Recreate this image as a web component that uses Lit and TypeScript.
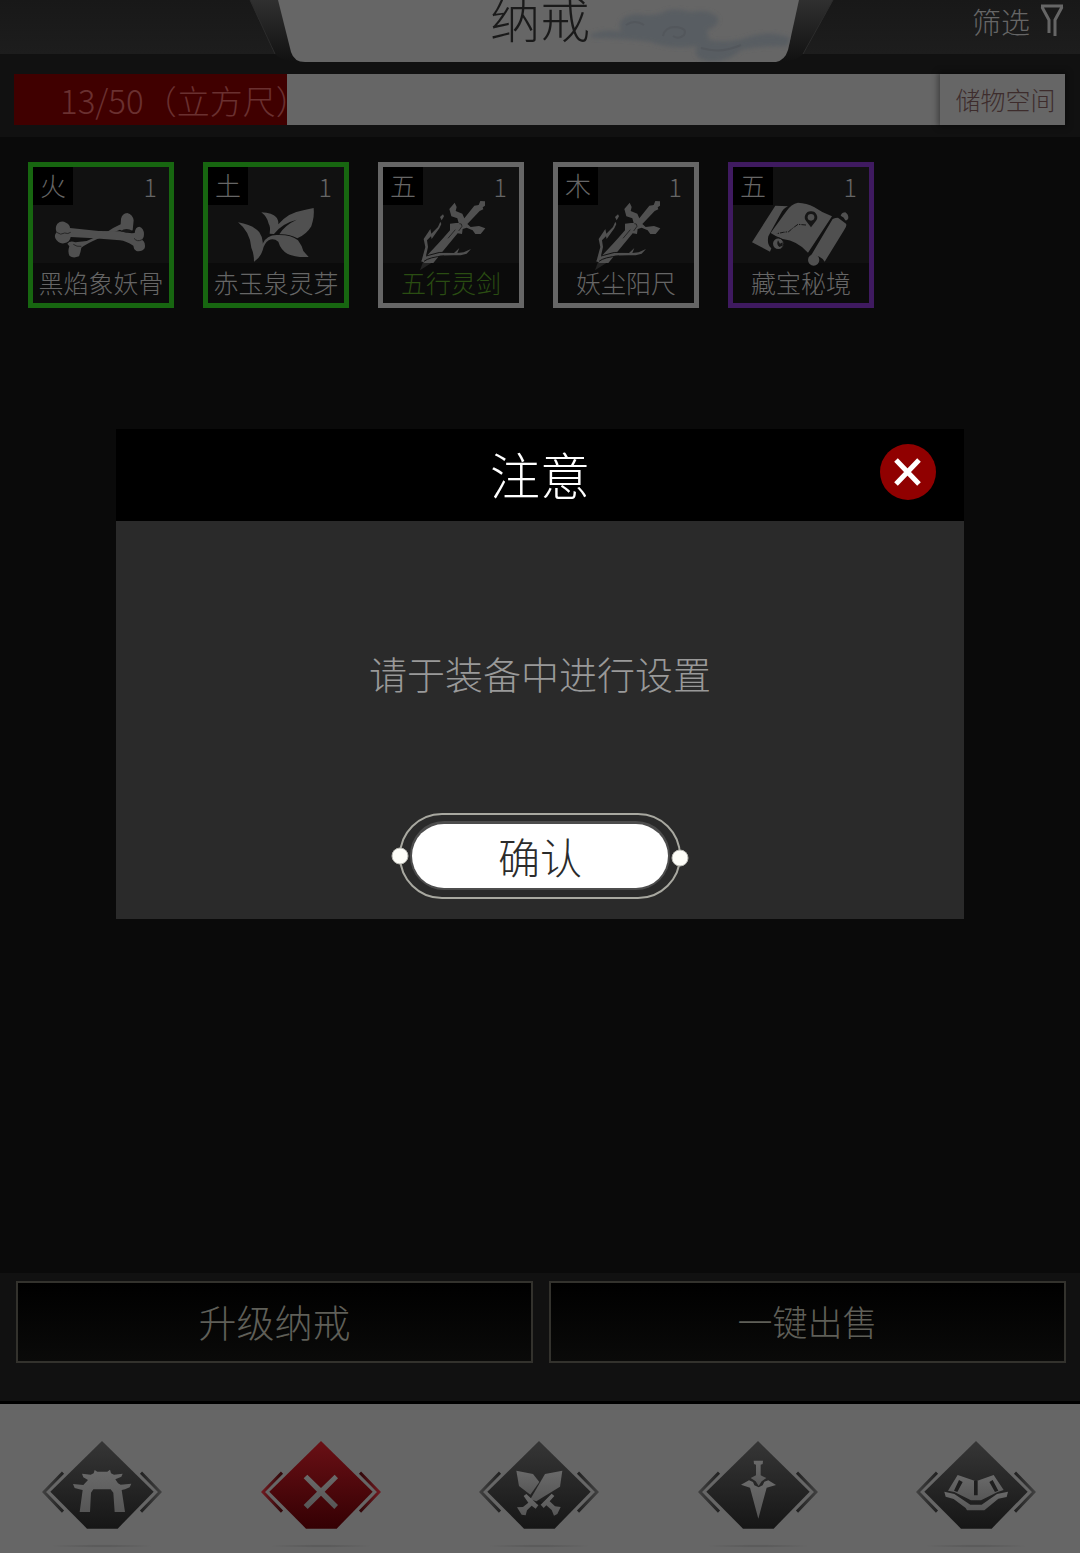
import { LitElement, html, svg, css } from "lit";
import { customElement, property, state } from "lit/decorators.js";
import { classMap } from "lit/directives/class-map.js";
import { styleMap } from "lit/directives/style-map.js";

type Art = "bone" | "sprout" | "sword" | "map";
type Rarity = "green" | "white" | "purple";

interface Item {
  element: string;
  count: number;
  name: string;
  art: Art;
  rarity: Rarity;
  marked?: boolean;
}

const ITEMS: Item[] = [
  { element: "火", count: 1, name: "黑焰象妖骨", art: "bone", rarity: "green" },
  { element: "土", count: 1, name: "赤玉泉灵芽", art: "sprout", rarity: "green" },
  { element: "五", count: 1, name: "五行灵剑", art: "sword", rarity: "white", marked: true },
  { element: "木", count: 1, name: "妖尘阳尺", art: "sword", rarity: "white" },
  { element: "五", count: 1, name: "藏宝秘境", art: "map", rarity: "purple" },
];

const ART = {
  bone: {
    box: "39 36 408 408",
    shape: svg`
      <g fill="#505050">
        <path d="M148 274 Q142 292 149 303 Q160 311 177 304 Q182 292 184 278 Q200 266 232 252 L300 224 Q318 236 338 226 L341 196 Q338 178 322 174 Q306 176 303 192 L302 208 Q280 218 262 230 L200 258 L166 262 Q150 256 142 266Z"/>
        <path d="M112 206 Q124 195 138 203 Q150 208 150 219 L236 228 L300 229 Q326 236 344 234 Q346 215 358 215 Q372 220 372 238 Q373 247 366 254 Q378 262 374 280 Q366 291 349 288 Q340 282 340 272 Q318 258 300 256 L222 250 L152 246 Q150 262 132 265 Q114 267 106 250 Q102 240 110 232 Q104 218 112 206Z"/>
      </g>
      <path d="M110 232 Q122 242 134 234 M134 234 Q144 238 152 232 M366 254 Q352 262 342 250 M160 268 Q170 276 184 274" fill="none" stroke="#262626" stroke-width="3"/>
      <path d="M302 229 Q318 216 338 228 Q320 236 302 229Z" fill="#181818"/>`,
  },
  sprout: {
    box: "564 36 408 408",
    shape: svg`
      <path d="M654 202 Q700 210 718 232 Q730 250 728 266 Q740 240 770 240 Q812 238 834 256 Q846 272 850 288 L866 306 Q824 308 802 296 Q782 284 775 260 Q760 248 746 256 Q732 266 728 286 Q720 310 702 320 Q702 296 694 278 Q690 230 654 202Z" fill="#505050"/>
      <path d="M724 172 Q758 174 768 186 Q776 194 775 208 Q806 172 850 166 Q868 162 881 159 Q884 184 874 214 Q860 238 832 250 Q806 236 778 238 Q792 212 830 194 Q784 206 762 237 L749 236 Q752 214 746 206 Q742 186 724 172Z" fill="#505050"/>`,
  },
  sword: {
    box: "39 36 408 408",
    shape: svg`
      <g fill="#505050">
        <path d="M313 152 L326 150 L331 138 L345 139 L345 152 L338 157 L340 163 L329 168 L292 207 L302 216 L327 213 L346 220 L332 237 L316 237 L308 226 L290 218 L278 222 L276 237 L263 235 L216 292 L190 324 L163 324 L154 318 Q190 284 240 226 L240 206 L258 204 L266 204 L262 190 L244 184 L238 162 L254 143 L260 156 L257 168 L277 176 L283 190Z"/>
        <path d="M154 320 L166 276 L161 252 L181 222 L184 236 L204 216 L211 200 L214 207 L208 220 L185 252 L183 244 L171 256 L174 276 L168 302 Q206 290 252 294 L268 279 L262 294 L281 292 L303 282 L290 296 L272 301 Q230 300 190 303 Q174 306 154 320Z"/>
        <path d="M215 196 L210 186 L219 178 L222 184Z"/>
        <path d="M158 324 L184 324 L150 346Z" opacity=".35"/>
      </g>
      <path d="M190 272 L172 298 M168 303 Q206 288 250 291 M162 319 Q178 306 222 303" fill="none" stroke="#131313" stroke-width="3"/>
      <path d="M268 206 Q276 204 276 214 L266 228 M256 224 L234 250" fill="none" stroke="#262626" stroke-width="3"/>`,
  },
  map: {
    box: "39 36 408 408",
    shape: svg`
      <g fill="#505050">
        <path d="M166 152 L204 154 Q190 160 182 176 L145 244 Q140 268 154 280 L150 290 L96 262Z"/>
        <path d="M152 234 L198 170 Q214 146 234 143 Q260 144 282 156 Q308 174 336 184 L264 293 Q234 258 188 252 Q166 244 152 234Z"/>
        <path d="M338 192 Q346 188 354 188 L378 206 Q382 212 372 226 L314 320 Q302 300 274 300Z"/>
        <circle cx="175" cy="266" r="16"/>
        <circle cx="281" cy="315" r="17"/>
        <path d="M362 182 Q366 172 376 172 Q386 178 385 190 Q382 198 376 196 Q372 186 362 182Z"/>
      </g>
      <path d="M166 248 Q186 246 192 264 Q190 276 182 284" fill="none" stroke="#161616" stroke-width="3"/>
      <path d="M174 256 Q168 268 178 276 L188 272 L188 262 L180 266Z" fill="#161616"/>
      <path d="M273 169 A18 18 0 0 1 287 199 L273 217 L259 199 A18 18 0 0 1 273 169Z" fill="#161616"/>
      <circle cx="273" cy="187" r="10" fill="#505050"/>
      <path d="M258 210 L234 208 L220 218 L206 230 L190 232 L170 236" fill="none" stroke="#161616" stroke-width="3" stroke-dasharray="14 3 4 3"/>`,
  },
};

interface NavEntry {
  label: string;
  centre: number;
  active?: boolean;
  glyph: unknown;
}

const NAV: NavEntry[] = [
  {
    label: "宗门",
    centre: 306,
    glyph: svg`<path d="M284 240 L292 245 L322 245 L330 239 L333 250 L342 254 L368 251 L364 260 L346 268 L354 280 L362 284 L394 281 L389 292 L375 298 L365 300 L375 366 L344 366 L340 308 L332 298 L280 298 L273 308 L270 366 L239 366 L248 300 L238 298 L224 294 L219 282 L250 285 L264 270 L250 262 L246 251 L272 254 L281 250Z"/>`,
  },
  {
    label: "关闭",
    centre: 963,
    active: true,
    glyph: svg`<path d="M922 254 L963 294 L1004 254 L1014 265 L974 305 L1014 345 L1003 357 L963 317 L923 357 L911 345 L951 305 L911 265Z"/>`,
  },
  {
    label: "战斗",
    centre: 298,
    glyph: svg`
      <path d="M230 242 L280 252 L299 276 L272 314 L238 288Z"/>
      <path d="M368 242 L361 290 L290 334 L272 328 L316 252Z"/>
      <path d="M252 318 L260 312 L296 346 L288 356 L276 347 L262 361 L258 376 L246 374 L232 352 L250 351 L266 338Z"/>
      <path d="M336 311 L344 318 L330 334 L346 349 L363 351 L353 372 L343 377 L336 360 L320 346 L312 354 L303 344Z"/>
      <path d="M298 332 L308 338 L298 344 L288 338Z" fill="#1a1a1a"/>`,
  },
  {
    label: "法宝",
    centre: 953,
    glyph: svg`
      <path d="M940 212 L968 212 L967 222 L961 224 L961 256 L978 264 L964 274 L955 288 L946 274 L931 264 L947 256 L947 224 L941 222Z"/>
      <path d="M902 284 L926 271 L938 276 L942 286 L955 292 L967 286 L972 275 L984 271 L1007 285 L979 293 L954 386 L929 293Z"/>`,
  },
  {
    label: "功法",
    centre: 287,
    glyph: svg`
      <path d="M232 255 L287 274 L340 255 L370 300 L352 306 L302 331 L272 331 L222 306 L203 302Z"/>
      <path d="M192 305 L222 312 L270 344 L304 344 L350 312 L383 305 L379 321 L354 326 L312 361 L260 361 L256 354 L220 327 L196 320Z"/>
      <path d="M281 272 L292 272 L292 316 L281 316Z M236 270 L247 276 L231 306 L221 302Z M337 270 L327 276 L344 306 L354 302Z" fill="#1e1e1e"/>`,
  },
];

@customElement("item-slot")
export class ItemSlot extends LitElement {
  @property({ attribute: false }) item!: Item;

  static styles = css`
    :host {
      display: block;
    }
    .slot {
      box-sizing: border-box;
      width: 146px;
      height: 146px;
      padding: 0;
      border: 5px solid #666;
      background: #111;
      color: #666;
      font: inherit;
      display: grid;
      grid-template-columns: 40px 1fr;
      grid-template-rows: 38px 1fr 40px;
    }
    .green {
      border-color: #176610;
    }
    .purple {
      border-color: #3f1a60;
    }
    .art {
      grid-area: 1 / 1 / 4 / 3;
      width: 136px;
      height: 136px;
      z-index: 1;
    }
    .badge {
      grid-area: 1 / 1;
      z-index: 2;
      background: #000;
      font-size: 26px;
      line-height: 36px;
    }
    .count {
      grid-area: 1 / 2;
      padding-right: 12px;
      text-align: right;
      font-size: 25px;
      line-height: 38px;
    }
    .name {
      grid-area: 3 / 1 / 4 / 3;
      background: #0b0b0b;
      font-size: 25px;
      line-height: 38px;
      white-space: nowrap;
    }
    .marked {
      color: #2a4d12;
    }
  `;

  render() {
    const { element, count, name, art, rarity, marked } = this.item;
    return html`
      <button class="slot ${rarity}">
        <span class="badge">${element}</span>
        <span class="count">${count}</span>
        <svg class="art" viewBox=${ART[art].box} aria-hidden="true">${ART[art].shape}</svg>
        <span class=${classMap({ name: true, marked: !!marked })}>${name}</span>
      </button>
    `;
  }
}

@customElement("nav-bar")
export class NavBar extends LitElement {
  static styles = css`
    :host {
      display: block;
    }
    .bar {
      display: flex;
      justify-content: space-between;
      padding: 37px 44px 0 42px;
      border-top: 3px solid #000;
      background: #666;
    }
    .link {
      display: block;
    }
    .icon {
      display: block;
      width: 120px;
      height: 112px;
    }
  `;

  private renderEntry(n: NavEntry, i: number) {
    const top = n.active ? "#6a1015" : "#363636";
    const bottom = n.active ? "#340003" : "#161616";
    return html`
      <a class="link" href="#" aria-label=${n.label} aria-current=${n.active ? "page" : "false"}>
        <svg class="icon" viewBox="-180 153 360 336" aria-hidden="true">
          <defs>
            <linearGradient id="body${i}" x1="0" y1="0" x2="0" y2="1">
              <stop offset="0" stop-color=${top} />
              <stop offset="1" stop-color=${bottom} />
            </linearGradient>
            <linearGradient id="mark${i}" x1="0" y1="0" x2="0" y2="1">
              <stop offset="0" stop-color="#6a6a6a" />
              <stop offset="1" stop-color="#565656" />
            </linearGradient>
            <linearGradient id="wing${i}" gradientUnits="userSpaceOnUse" x1="-178" y1="0" x2="178" y2="0">
              <stop offset="0" stop-color=${n.active ? "#701a20" : "#404040"} />
              <stop offset=".17" stop-color=${n.active ? "#30080a" : "#222"} />
              <stop offset=".83" stop-color=${n.active ? "#30080a" : "#222"} />
              <stop offset="1" stop-color=${n.active ? "#701a20" : "#404040"} />
            </linearGradient>
            <radialGradient id="shade${i}">
              <stop offset="0" stop-color="#000" stop-opacity=".16" />
              <stop offset="1" stop-color="#000" stop-opacity="0" />
            </radialGradient>
          </defs>
          <path d="M0 153 L155 305 L47 416 L-45 416 L-155 305Z" fill="url(#body${i})" />
          <path
            d="M-117 248 L-174 306 L-117 365 M117 248 L174 306 L117 365"
            fill="none"
            stroke="url(#wing${i})"
            stroke-width="9"
          />
          <g transform="translate(${-n.centre} 0)" fill="url(#mark${i})">${n.glyph}</g>
          <ellipse cx="0" cy="468" rx="160" ry="5" fill="url(#shade${i})" />
        </svg>
      </a>
    `;
  }

  render() {
    return html`<nav class="bar">${NAV.map((n, i) => this.renderEntry(n, i))}</nav>`;
  }
}

@customElement("notice-dialog")
export class NoticeDialog extends LitElement {
  static styles = css`
    :host {
      display: block;
    }
    .panel {
      background: #2a2a2a;
    }
    .head {
      display: grid;
      grid-template-columns: 84px 1fr 84px;
      align-items: center;
      height: 92px;
      background: #000;
    }
    .title {
      grid-column: 2;
      margin: 0;
      color: #fff;
      font-size: 50px;
      font-weight: inherit;
      line-height: 88px;
      text-align: center;
      align-self: start;
    }
    .close {
      width: 56px;
      height: 56px;
      margin-bottom: 6px;
      padding: 0;
      border: 0;
      border-radius: 50%;
      background: #900000;
    }
    .cross {
      display: block;
      width: 56px;
      height: 56px;
    }
    .message {
      margin: 0;
      padding: 122px 24px 110px;
      color: #999;
      font-size: 38px;
      line-height: 60px;
      text-align: center;
    }
    .actions {
      display: flex;
      justify-content: center;
      padding-bottom: 20px;
    }
    .confirm {
      display: grid;
      place-items: center;
      padding: 0;
      border: 0;
      background: none;
      color: #2b2b2b;
      font: inherit;
      font-size: 42px;
      line-height: 60px;
    }
    .frame,
    .label {
      grid-area: 1 / 1;
    }
    .frame {
      display: block;
      width: 300px;
      height: 86px;
    }
  `;

  private dismiss() {
    this.dispatchEvent(new CustomEvent("dismiss", { bubbles: true, composed: true }));
  }

  render() {
    return html`
      <section class="panel" role="dialog" aria-modal="true" aria-labelledby="title">
        <header class="head">
          <h2 class="title" id="title">注意</h2>
          <button class="close" aria-label="关闭" @click=${this.dismiss}>
            <svg class="cross" viewBox="0 0 56 56" aria-hidden="true">
              <path d="M16 16 L39 40 M39 16 L16 40" stroke="#fff" stroke-width="5" />
            </svg>
          </button>
        </header>
        <p class="message">请于装备中进行设置</p>
        <div class="actions">
          <button class="confirm" @click=${this.dismiss}>
            <svg class="frame" viewBox="0 0 300 86" aria-hidden="true">
              <rect x="10" y="1" width="280" height="84" rx="42" fill="none" stroke="#a8a8a0" stroke-width="2" />
              <rect x="20" y="8" width="260" height="69" rx="34" fill="#4c4c4c" />
              <rect x="22" y="11" width="256" height="64" rx="32" fill="#fff" />
              <circle cx="10" cy="43" r="8" fill="#fdfdf8" stroke="#b9b9b2" />
              <circle cx="290" cy="45" r="8" fill="#fdfdf8" stroke="#b9b9b2" />
            </svg>
            <span class="label">确认</span>
          </button>
        </div>
      </section>
    `;
  }
}

@customElement("app-root")
export class AppRoot extends LitElement {
  @state() private noticeOpen = true;
  @state() private used = 13;
  @state() private capacity = 50;

  static styles = css`
    :host {
      display: block;
      font-family: "Noto Sans CJK SC", "Noto Sans", sans-serif;
      font-weight: 300;
    }
    .page {
      position: relative;
      display: flex;
      flex-direction: column;
      min-height: 100vh;
      background: #0a0a0a;
    }
    .top {
      position: relative;
      z-index: 1;
      display: grid;
      grid-template-columns: 1fr 590px 1fr;
      height: 54px;
      background: linear-gradient(#181818, #1d1d1d);
    }
    .tab {
      grid-column: 2;
      display: grid;
      justify-items: center;
      height: 62px;
    }
    .plate,
    .title {
      grid-area: 1 / 1;
    }
    .plate {
      display: block;
      width: 590px;
      height: 62px;
    }
    .title {
      margin: 0;
      color: #1a1a1a;
      font-size: 50px;
      font-weight: inherit;
      line-height: 32px;
    }
    .filter {
      justify-self: end;
      align-self: start;
      display: flex;
      align-items: center;
      gap: 10px;
      padding: 0 16px 0 0;
      border: 0;
      background: none;
      color: #666;
      font: inherit;
      font-size: 29px;
      line-height: 42px;
    }
    .funnel {
      width: 24px;
      height: 34px;
    }
    .storage {
      padding: 20px 15px 12px 14px;
      background: #111;
    }
    .meter {
      display: flex;
      justify-content: space-between;
      height: 51px;
      background: #666;
    }
    .fill {
      box-sizing: border-box;
      padding-left: 46px;
      background: #400000;
      color: #6a3030;
      font-size: 33px;
      line-height: 53px;
      white-space: nowrap;
    }
    .space {
      width: 125px;
      padding: 0 0 2px 6px;
      border: 0;
      background: #666;
      box-shadow: 0 0 6px 2px rgba(0, 0, 0, 0.4);
      color: #3d2c2c;
      font: inherit;
      font-size: 25px;
    }
    .items {
      flex: 1;
      display: flex;
      flex-wrap: wrap;
      align-content: flex-start;
      gap: 29px;
      margin: 0;
      padding: 25px 28px;
      list-style: none;
    }
    .actions {
      display: grid;
      grid-template-columns: 1fr 1fr;
      gap: 16px;
      padding: 8px 14px 38px 16px;
      background: #111;
    }
    .action {
      height: 82px;
      padding: 0 0 4px;
      border: 2px solid #33322d;
      background: linear-gradient(#000, #0a0a09);
      color: #5f5f58;
      font: inherit;
      font-size: 38px;
    }
    .compact {
      font-size: 35px;
    }
    .overlay {
      position: absolute;
      z-index: 2;
      inset: 0;
      padding: 429px 116px 0;
    }
  `;

  render() {
    const share = (this.used / this.capacity) * 100;
    return html`
      <main class="page">
        <header class="top">
          <div class="tab">
            <svg class="plate" viewBox="0 0 590 62" aria-hidden="true">
              <defs>
                <linearGradient id="edge" x1="0" y1="0" x2="0" y2="1">
                  <stop offset="0" stop-color="#303030" />
                  <stop offset="1" stop-color="#111" />
                </linearGradient>
                <filter id="mist" x="-10%" y="-10%" width="120%" height="120%">
                  <feGaussianBlur stdDeviation="2" />
                </filter>
                <clipPath id="face">
                  <path d="M33 0 L46 52 Q49 62 60 62 L531 62 Q540 60 543 50 L554 0Z" />
                </clipPath>
              </defs>
              <path d="M5 0 L30 54 Q38 62 60 62 L531 62 Q550 62 558 54 L588 0Z" fill="url(#edge)" />
              <path d="M5 0 L30 54 M558 54 L588 0" stroke="#2c2c2c" fill="none" />
              <g clip-path="url(#face)">
                <rect width="590" height="62" fill="#666" />
                <g transform="translate(6 0)">
                  <path
                    d="M340 34 Q356 28 370 32 Q364 16 386 14 Q398 16 408 14 Q420 6 440 12 Q462 8 468 20 Q464 28 456 30 L458 40 Q480 44 500 36 Q520 30 540 38 L536 46 Q508 46 490 50 Q480 60 462 62 Q440 60 446 46 Q420 50 400 42 Q370 38 340 38Z"
                    filter="url(#mist)"
                    fill="#595d62"
                  />
                  <path
                    d="M412 36 Q414 27 424 27 Q437 28 433 35 Q428 40 422 36 M375 25 Q384 19 393 25 M450 48 Q470 54 490 45"
                    fill="none"
                    stroke="#53575c"
                    stroke-width="2"
                  />
                </g>
              </g>
            </svg>
            <h1 class="title">纳戒</h1>
          </div>
          <button class="filter">
            筛选
            <svg class="funnel" viewBox="0 0 24 34" aria-hidden="true">
              <path
                d="M1 2 H23 M2 3 L9 16 V29 M22 3 L15 16 V32"
                fill="none"
                stroke="#666"
                stroke-width="3"
              />
            </svg>
          </button>
        </header>
        <section class="storage">
          <div class="meter">
            <div class="fill" style=${styleMap({ width: `${share}%` })}>
              ${this.used}/${this.capacity}（立方尺）
            </div>
            <button class="space">储物空间</button>
          </div>
        </section>
        <ul class="items">
          ${ITEMS.map((item) => html`<li><item-slot .item=${item}></item-slot></li>`)}
        </ul>
        <footer class="actions">
          <button class="action">升级纳戒</button>
          <button class="action compact">一键出售</button>
        </footer>
        <nav-bar></nav-bar>
        ${this.noticeOpen
          ? html`<div class="overlay">
              <notice-dialog @dismiss=${() => (this.noticeOpen = false)}></notice-dialog>
            </div>`
          : null}
      </main>
    `;
  }
}
